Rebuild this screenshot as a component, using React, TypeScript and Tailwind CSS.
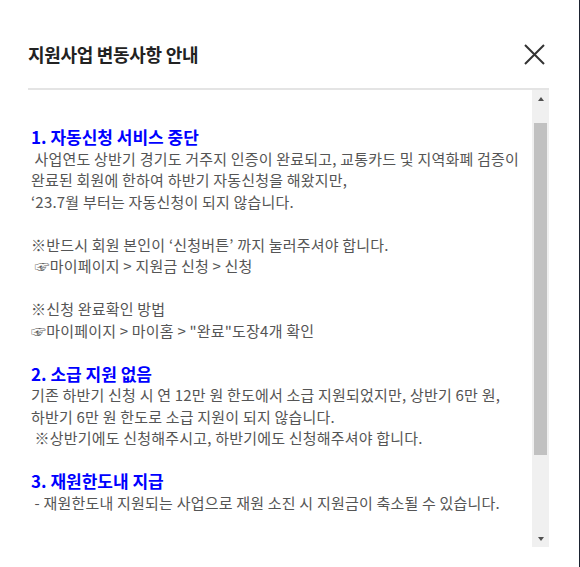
type Line = { text: string; heading?: boolean };

const lines: Line[] = [
  { text: '1. 자동신청 서비스 중단', heading: true },
  { text: ' 사업연도 상반기 경기도 거주지 인증이 완료되고, 교통카드 및 지역화폐 검증이' },
  { text: '완료된 회원에 한하여 하반기 자동신청을 해왔지만,' },
  { text: '‘23.7월 부터는 자동신청이 되지 않습니다.' },
  { text: '' },
  { text: '※반드시 회원 본인이 ‘신청버튼’ 까지 눌러주셔야 합니다.' },
  { text: ' ☞마이페이지 > 지원금 신청 > 신청' },
  { text: '' },
  { text: '※신청 완료확인 방법' },
  { text: '☞마이페이지 > 마이홈 > "완료"도장4개 확인' },
  { text: '' },
  { text: '2. 소급 지원 없음', heading: true },
  { text: '기존 하반기 신청 시 연 12만 원 한도에서 소급 지원되었지만, 상반기 6만 원,' },
  { text: '하반기 6만 원 한도로 소급 지원이 되지 않습니다.' },
  { text: ' ※상반기에도 신청해주시고, 하반기에도 신청해주셔야 합니다.' },
  { text: '' },
  { text: '3. 재원한도내 지급', heading: true },
  { text: ' - 재원한도내 지원되는 사업으로 재원 소진 시 지원금이 축소될 수 있습니다.' },
];

function ScrollBar() {
  return (
    <div className="w-[17px] shrink-0 bg-[#f0f0f0] flex flex-col items-center">
      <div className="h-[17px] flex items-center justify-center">
        <div className="w-0 h-0 border-x-[3.5px] border-x-transparent border-b-[4px] border-b-[#505050]" />
      </div>
      <div className="flex-1 w-full px-[2px] pt-[16px] pb-[75px]">
        <div className="h-full bg-[#c1c1c1]" />
      </div>
      <div className="h-[17px] flex items-center justify-center">
        <div className="w-0 h-0 border-x-[3.5px] border-x-transparent border-t-[4px] border-t-[#505050]" />
      </div>
    </div>
  );
}

export default function App() {
  return (
    <div className="w-[580px] h-[567px] bg-[#1b2230] font-['Noto_Sans_CJK_KR',sans-serif]">
      <div className="w-[579px] h-[567px] bg-white flex flex-col pl-7 pr-[30px] pb-5">
        <div className="h-[88px] shrink-0 flex items-center justify-between pt-[30px] pb-[10px]">
          <h2 className="text-[18px] font-bold text-[#222] tracking-[-0.3px]">지원사업 변동사항 안내</h2>
          <button className="w-6 h-6 flex items-center justify-center mr-[3px] text-[#333]">
            <svg width="21" height="21" viewBox="0 0 21 21" fill="none" stroke="currentColor" strokeWidth="2">
              <path d="M1 1L20 20M20 1L1 20" />
            </svg>
          </button>
        </div>
        <div className="h-[2px] shrink-0 bg-[#e4e4e4]" />
        <div className="flex-1 min-h-0 flex">
          <div className="flex-1 overflow-hidden">
            <div className="pt-[36px] pl-[3px] text-[15px] leading-[21.5px] text-[#555]">
              {lines.map((l, i) =>
                l.heading ? (
                  <div key={i} className="text-[17px] font-bold text-[#0000ff] whitespace-pre">
                    {l.text}
                  </div>
                ) : (
                  <div key={i} className="whitespace-pre h-[21.5px] tracking-[0.2px]">
                    {l.text}
                  </div>
                ),
              )}
            </div>
          </div>
          <ScrollBar />
        </div>
      </div>
    </div>
  );
}
